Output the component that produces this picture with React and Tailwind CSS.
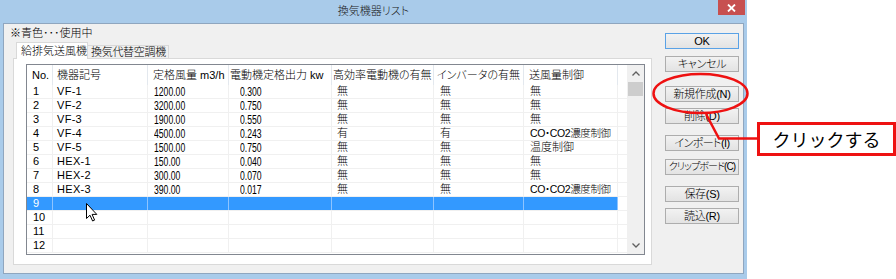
import React from 'react'

const columns = [
  { label: 'No.', w: 'w-[26px]', hp: 'pl-[5px]', cp: 'pl-[6px]' },
  { label: '機器記号', w: 'w-[95px]', hp: 'pl-[4px]', cp: 'pl-[4px]' },
  { label: '定格風量 m3/h', w: 'w-[81px]', hp: 'pl-[5px]', cp: 'pl-[6px]' },
  { label: '電動機定格出力 kw', w: 'w-[103px]', hp: 'pl-[1px]', cp: 'pl-[11px]' },
  { label: '高効率電動機の有無', w: 'w-[102px]', hp: 'pl-[1px]', cp: 'pl-[5px]' },
  { label: 'インバータの有無', w: 'w-[90px]', hp: 'pl-[3px]', cp: 'pl-[6px]' },
  { label: '送風量制御', w: 'w-[94px]', hp: 'pl-[5px]', cp: 'pl-[6px]' },
]

const rows = [
  ['1', 'VF-1', '1200.00', '0.300', '無', '無', '無'],
  ['2', 'VF-2', '3200.00', '0.750', '無', '無', '無'],
  ['3', 'VF-3', '1900.00', '0.550', '無', '無', '無'],
  ['4', 'VF-4', '4500.00', '0.243', '有', '有', 'CO・CO2濃度制御'],
  ['5', 'VF-5', '1500.00', '0.750', '無', '無', '温度制御'],
  ['6', 'HEX-1', '150.00', '0.040', '無', '無', '無'],
  ['7', 'HEX-2', '300.00', '0.070', '無', '無', '無'],
  ['8', 'HEX-3', '390.00', '0.017', '無', '無', 'CO・CO2濃度制御'],
  ['9', '', '', '', '', '', ''],
  ['10', '', '', '', '', '', ''],
  ['11', '', '', '', '', '', ''],
  ['12', '', '', '', '', '', ''],
]

// right-hand buttons, margin = gap above each one
const buttons = [
  { label: 'OK', mt: 'mt-[9px]', primary: true },
  { label: 'キャンセル', mt: 'mt-[7px]' },
  { label: '新規作成(N)', mt: 'mt-[14px]' },
  { label: '削除(D)', mt: 'mt-[6px]' },
  { label: 'インポート(I)', mt: 'mt-[11px]', font: 'text-[11px] tracking-[-0.6px]' },
  { label: 'クリップボード(C)', mt: 'mt-[8px]', font: 'text-[10px] tracking-[-0.9px]' },
  { label: '保存(S)', mt: 'mt-[11px]' },
  { label: '読込(R)', mt: 'mt-[6px]' },
]

function Chevron({ up }) {
  return (
    <svg width="8" height="5" viewBox="0 0 8 5">
      <path
        d={up ? 'M0.5 4.5 L4 1 L7.5 4.5' : 'M0.5 0.5 L4 4 L7.5 0.5'}
        fill="none"
        stroke="#606060"
        strokeWidth="1.3"
      />
    </svg>
  )
}

function Cell({ col, i, value, selected }) {
  const numeric = i === 2 || i === 3
  let text = 'text-[11px]'
  if (i === 1) text = 'text-[11px] tracking-[0.3px]'
  if (value.startsWith('CO')) text = 'text-[10.5px] tracking-[-0.4px]'
  return (
    <div
      className={`${col.w} ${col.cp} h-full shrink-0 border-r ${selected ? 'border-[#8ec4ff]' : 'border-[#f0f0f0]'} flex items-center overflow-hidden whitespace-nowrap`}
    >
      {numeric ? (
        <span className="inline-block origin-left scale-x-72 text-[12px]">{value}</span>
      ) : (
        <span className={text}>{value}</span>
      )}
    </div>
  )
}

export default function App() {
  return (
    <div className="relative w-[896px] h-[279px] bg-white overflow-hidden text-black font-light [font-family:'Liberation_Sans','Noto_Sans_CJK_JP',sans-serif] [font-feature-settings:'palt']">
      <div className="w-[747px] h-[279px] bg-[#a9cbea] flex flex-col">
        {/* title bar */}
        <div className="h-[23px] flex items-start">
          <div className="w-[29px]"></div>
          <div className="flex-1 text-center text-[11px] leading-[23px] text-[#1a1a1a]">換気機器リスト</div>
          <div className="w-[27px] h-[15px] mr-[2px] bg-[#c75050] flex items-center justify-center">
            <svg width="9" height="8" viewBox="0 0 9 8">
              <path d="M1 0.5 L8 7.5 M8 0.5 L1 7.5" stroke="white" strokeWidth="1.8" />
            </svg>
          </div>
        </div>

        {/* client area */}
        <div className="mx-[3px] h-[251px] border border-[#8fa6bf] bg-[#f0f0f0] flex">
          <div className="w-[648px] pl-[9px] pt-[2px] flex flex-col">
            <div className="h-[14px] -ml-[3px] text-[11px] leading-[14px]">※青色･･･使用中</div>
            <div className="h-[16px] mt-[2px] pl-[3px] flex items-end">
              <div className="relative z-10 -mb-px w-[72px] h-[17px] bg-white border border-b-0 border-[#d9d9d9] text-[11px] leading-[16px] pl-[4px] whitespace-nowrap">
                給排気送風機
              </div>
              <div className="w-[81px] h-[13px] bg-[#f0f0f0] border border-b-0 border-l-0 border-[#d9d9d9] text-[11px] leading-[13px] pl-[3px] whitespace-nowrap tracking-[-0.3px]">
                換気代替空調機
              </div>
            </div>
            <div className="w-[639px] h-[207px] border border-[#d9d9d9] bg-white pl-[12px] pt-[5px]">
              <div className="w-[619px] h-[191px] border border-[#828790] bg-white flex">
                <div className="w-[600px] flex flex-col">
                  <div className="h-[20px] flex">
                    {columns.map((col) => (
                      <div
                        key={col.label}
                        className={`${col.w} ${col.hp} h-full shrink-0 border-r border-[#e3e8ee] text-[11px] flex items-center whitespace-nowrap overflow-hidden`}
                      >
                        {col.label}
                      </div>
                    ))}
                  </div>
                  {rows.map((row) => {
                    const selected = row[0] === '9'
                    return (
                      <div
                        key={row[0]}
                        className={`h-[14px] flex border-b border-[#f0f0f0] ${selected ? 'text-white' : ''}`}
                      >
                        <div className={`flex h-full ${selected ? 'bg-[#3399ff]' : ''}`}>
                          {columns.map((col, i) => (
                            <Cell key={i} col={col} i={i} value={row[i]} selected={selected} />
                          ))}
                        </div>
                        <div className="flex-1"></div>
                      </div>
                    )
                  })}
                </div>
                {/* scrollbar */}
                <div className="w-[17px] bg-[#f0f0f0] flex flex-col">
                  <div className="h-[17px] flex items-center justify-center">
                    <Chevron up />
                  </div>
                  <div className="h-[14px] mx-[1px] bg-[#cdcdcd]"></div>
                  <div className="flex-1"></div>
                  <div className="h-[17px] flex items-center justify-center">
                    <Chevron />
                  </div>
                </div>
              </div>
            </div>
          </div>

          {/* buttons */}
          <div className="ml-[13px] w-[74px] flex flex-col">
            {buttons.map((b) => (
              <div
                key={b.label}
                className={`${b.mt} h-[16px] border ${b.primary ? 'border-[#5aa2e6]' : 'border-[#adadad]'} bg-linear-to-b from-[#f2f2f2] to-[#e3e3e3] leading-[14px] text-center whitespace-nowrap ${b.font || 'text-[11px] tracking-[-0.3px]'}`}
              >
                {b.label}
              </div>
            ))}
          </div>
        </div>
      </div>

      {/* annotation overlay */}
      <svg className="absolute left-0 top-0 pointer-events-none" width="896" height="279">
        <ellipse cx="700.5" cy="93.5" rx="47" ry="19.5" fill="none" stroke="#ee1111" strokeWidth="2.5" />
        <polyline points="706,114 719,138.5 758,138.5" fill="none" stroke="#ee1111" strokeWidth="2.5" />
      </svg>
      <div className="absolute left-[757px] top-[122px] w-[139px] h-[34px] border-[3px] border-[#ee1111] bg-white flex items-center justify-center text-[18px] leading-none font-normal [font-family:'Noto_Sans_CJK_JP',sans-serif] [font-feature-settings:normal]">
        クリックする
      </div>

      {/* mouse cursor */}
      <svg className="absolute left-[86px] top-[203px] pointer-events-none" width="12" height="19" viewBox="0 0 12 19">
        <path
          d="M0.5 0.5 L0.5 15.5 L4 12.2 L6.6 18 L8.6 17.1 L6.1 11.4 L10.8 11.4 Z"
          fill="white"
          stroke="black"
          strokeWidth="1"
          strokeLinejoin="round"
        />
      </svg>
    </div>
  )
}
